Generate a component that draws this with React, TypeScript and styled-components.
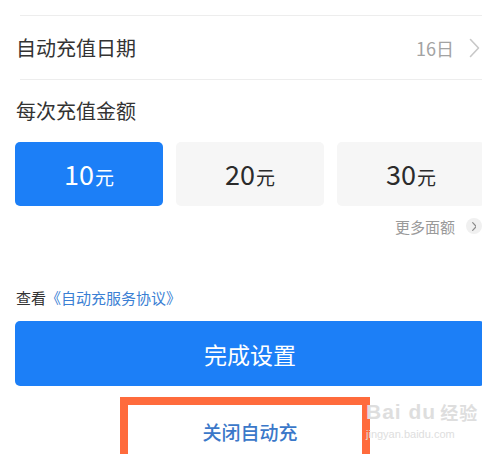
import styled, { createGlobalStyle } from "styled-components";

const GlobalStyle = createGlobalStyle`
    html, body {
        margin: 0;
        padding: 0;
        background: #ffffff;
        overflow: hidden;
    }
    body {
        width: 482px;
        height: 454px;
        font-family: "Noto Sans CJK SC", "Noto Sans", sans-serif;
        color: #333333;
    }
`;

const Page = styled.div`
    position: relative;
    width: 485px;
    height: 454px;
    padding: 15px 0 0 15px;
    box-sizing: border-box;
    overflow: hidden;
`;

const Divider = styled.div`
    height: 1px;
    margin-left: 5px;
    background: #ededed;
`;

const DateRow = styled.div`
    height: 63px;
    display: flex;
    align-items: center;
    justify-content: space-between;
    padding-left: 1px;
`;

const Label = styled.span`
    font-size: 20px;
    line-height: 26px;
    color: #333333;
`;

const DateValue = styled.span`
    display: flex;
    align-items: center;
    gap: 15px;
    margin-right: 5px;
    font-size: 18px;
    color: #a3a3a3;
`;

const SectionTitle = styled.div`
    padding: 18px 0 0 1px;
    margin-bottom: 18px;
    font-size: 20px;
    line-height: 26px;
`;

const AmountGrid = styled.div`
    display: grid;
    grid-template-columns: repeat(3, 148px);
    gap: 13px;
`;

const Amount = styled.div<{ $active?: boolean }>`
    height: 64px;
    border-radius: 5px;
    display: flex;
    align-items: baseline;
    justify-content: center;
    padding-top: 16px;
    box-sizing: border-box;
    background: ${(p) => (p.$active ? "#1c7ff7" : "#f6f6f6")};
    color: ${(p) => (p.$active ? "#ffffff" : "#2b2b2b")};
`;

const Num = styled.span`
    font-size: 27px;
    line-height: 32px;
`;

const Unit = styled.span`
    font-size: 19px;
    margin-left: 1px;
`;

const MoreRow = styled.div`
    margin-top: 10px;
    height: 20px;
    display: flex;
    align-items: center;
    justify-content: flex-end;
    gap: 11px;
    padding-right: 3px;
    font-size: 15px;
    color: #9a9a9a;
`;

const Circle = styled.span`
    width: 16px;
    height: 16px;
    border-radius: 50%;
    background: #f0f0f0;
    display: flex;
    align-items: center;
    justify-content: center;
`;

const Agreement = styled.div`
    margin-top: 52px;
    font-size: 15px;
    line-height: 20px;
    padding-left: 1px;
    color: #333333;
`;

const Link = styled.span`
    color: #3b7fd4;
`;

const DoneButton = styled.div`
    margin-top: 13px;
    height: 65px;
    border-radius: 5px;
    background: #1c7ff7;
    color: #ffffff;
    font-size: 23px;
    display: flex;
    align-items: center;
    justify-content: center;
`;

const CloseBox = styled.div`
    margin: 11px 0 0 105px;
    width: 250px;
    height: 80px;
    box-sizing: border-box;
    border: 8px solid #ff6b3c;
    background: #ffffff;
    padding: 16px 0 0 10px;
    text-align: center;
    font-size: 19px;
    line-height: 22px;
    font-weight: 500;
    color: #3b78c9;
`;

const Watermark = styled.div`
    position: absolute;
    left: 366px;
    top: 400px;
    display: flex;
    flex-direction: column;
    align-items: flex-start;
    color: #dedede;
    font-family: "Liberation Sans", sans-serif;
    pointer-events: none;
`;

const MarkTop = styled.div`
    display: flex;
    align-items: flex-end;
    font-size: 21px;
    font-weight: bold;
    line-height: 24px;
    letter-spacing: 1px;
`;

const MarkCn = styled.span`
    font-family: "Noto Sans CJK SC", sans-serif;
    font-size: 18px;
    margin-left: 4px;
`;

const MarkUrl = styled.div`
    font-size: 11px;
    line-height: 14px;
    margin-top: 3px;
`;

const Chevron = ({ size, color, width }: { size: number; color: string; width: number }) => (
    <svg width={size * 0.55} height={size} viewBox="0 0 11 20" fill="none">
        <path d="M1.5 1.5 L9.5 10 L1.5 18.5" stroke={color} strokeWidth={width} strokeLinecap="round" strokeLinejoin="round" />
    </svg>
);

const amounts = [10, 20, 30];

const App = () => {
    return (
        <>
            <GlobalStyle />
            <Page>
                <Divider />
                <DateRow>
                    <Label>自动充值日期</Label>
                    <DateValue>
                        16日
                        <Chevron size={20} color="#c8c8c8" width={1.6} />
                    </DateValue>
                </DateRow>
                <Divider />
                <SectionTitle>每次充值金额</SectionTitle>
                <AmountGrid>
                    {amounts.map((a, i) => (
                        <Amount key={a} $active={i === 0}>
                            <Num>{a}</Num>
                            <Unit>元</Unit>
                        </Amount>
                    ))}
                </AmountGrid>
                <MoreRow>
                    更多面额
                    <Circle>
                        <Chevron size={9} color="#8a8a8a" width={2.6} />
                    </Circle>
                </MoreRow>
                <Agreement>
                    查看<Link>《自动充服务协议》</Link>
                </Agreement>
                <DoneButton>完成设置</DoneButton>
                <CloseBox>关闭自动充</CloseBox>
                <Watermark>
                    <MarkTop>
                        Bai du<MarkCn>经验</MarkCn>
                    </MarkTop>
                    <MarkUrl>jingyan.baidu.com</MarkUrl>
                </Watermark>
            </Page>
        </>
    );
};

export default App;
